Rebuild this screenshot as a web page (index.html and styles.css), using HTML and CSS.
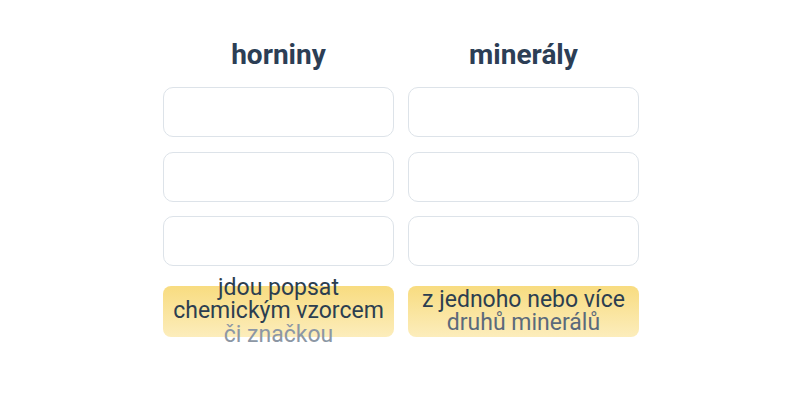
FILE: index.html
```html
<!DOCTYPE html>
<html lang="cs">
<head>
  <meta charset="UTF-8">
  <title>Horniny a minerály</title>
  <link rel="stylesheet" href="styles.css">
</head>
<body>

<div class="board">
  <div class="column">
    <h2>horniny</h2>
    <div class="slot"></div>
    <div class="slot"></div>
    <div class="slot"></div>
    <div class="tile">
      <p class="label">
        <span class="line">jdou popsat</span>
        <span class="line">chemickým vzorcem</span>
        <span class="line faint">či značkou</span>
      </p>
    </div>
  </div>
  <div class="column">
    <h2>minerály</h2>
    <div class="slot"></div>
    <div class="slot"></div>
    <div class="slot"></div>
    <div class="tile">
      <p class="label">
        <span class="line">z jednoho nebo více</span>
        <span class="line muted">druhů minerálů</span>
      </p>
    </div>
  </div>
</div>

</body>
</html>
```

FILE: styles.css
```css
body {
  margin: 0;
  padding-left: 2px;
  min-height: 400px;
  font-family: Roboto, "Liberation Sans", sans-serif;
  background: #fff;
}
.board {
  display: flex;
  justify-content: center;
  gap: 14px;
  padding: 36px 0 60px;
}
.column {
  width: 231px;
  display: flex;
  flex-direction: column;
}
h2 {
  margin: 0 0 14px;
  text-align: center;
  font-size: 28px;
  font-weight: 700;
  line-height: 37px;
  color: #2c3e55;
}
.slot {
  height: 50px;
  box-sizing: border-box;
  border: 1.5px solid #dde3e9;
  border-radius: 10px;
  margin-bottom: 14.5px;
}
.tile {
  height: 51px;
  margin-top: 5px;
  border-radius: 8px;
  background: linear-gradient(#f8dc80, #fcedbc);
  display: flex;
  align-items: center;
  justify-content: center;
  text-align: center;
  padding: 0 4px;
}
.label {
  margin: 0;
  font-size: 23px;
  line-height: 23.5px;
  color: #2c3e50;
}
.line {
  display: block;
}
.muted {
  color: #5b6a7b;
}
.faint {
  color: #8c97a4;
}
```
